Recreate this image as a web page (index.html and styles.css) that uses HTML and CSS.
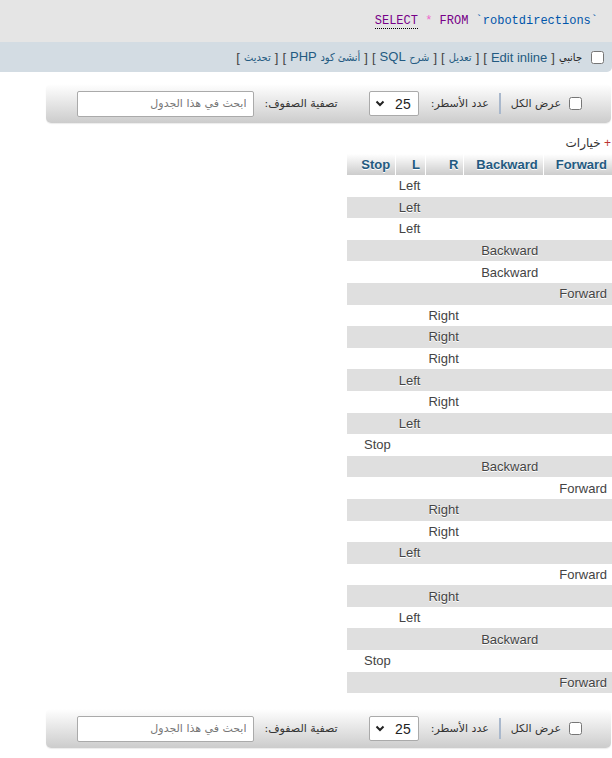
FILE: index.html
```html
<!DOCTYPE html>
<html lang="ar" dir="rtl">
<head>
<meta charset="utf-8">
<title>robotdirections</title>
<link rel="stylesheet" href="styles.css">
</head>
<body>
<div class="sql-box">
  <code class="sql"><span class="kw kw-first">SELECT</span> <span class="star">*</span> <span class="kw">FROM</span> <span class="ident">`robotdirections`</span></code>
</div>
<div class="tools-bar">
  <input type="checkbox" class="cb">
  <span class="tool-label ar">جانبي</span>
  <span class="br">[</span> <a class="lnk">Edit inline</a> <span class="br">]</span>
  <span class="br">[</span> <a class="lnk ar">تعديل</a> <span class="br">]</span>
  <span class="br">[</span> <a class="lnk"><span class="ar">شرح</span> SQL</a> <span class="br">]</span>
  <span class="br">[</span> <a class="lnk"><span class="ar">أنشئ كود</span> PHP</a> <span class="br">]</span>
  <span class="br">[</span> <a class="lnk ar">تحديث</a> <span class="br">]</span>
</div>

<div class="nav">
  <input type="checkbox" class="cb">
  <span class="nav-label show-all">عرض الكل</span>
  <span class="sep"></span>
  <span class="nav-label rows-label">عدد الأسطر:</span>
  <div class="select"><span class="sel-val">25</span><svg class="chev" width="10" height="7" viewBox="0 0 10 7"><path d="M1.5 1.5 L5 5 L8.5 1.5" fill="none" stroke="#222" stroke-width="2"/></svg></div>
  <span class="nav-label filter-label">تصفية الصفوف:</span>
  <input type="text" class="search" placeholder="ابحث في هذا الجدول">
</div>

<div class="options"><span class="plus">+</span> خيارات</div>

<table class="data">
  <thead>
    <tr><th>Forward</th><th>Backward</th><th>R</th><th>L</th><th class="th-stop">Stop</th></tr>
  </thead>
  <tbody>
    <tr><td></td><td></td><td></td><td>Left</td><td></td></tr>
    <tr><td></td><td></td><td></td><td>Left</td><td></td></tr>
    <tr><td></td><td></td><td></td><td>Left</td><td></td></tr>
    <tr><td></td><td>Backward</td><td></td><td></td><td></td></tr>
    <tr><td></td><td>Backward</td><td></td><td></td><td></td></tr>
    <tr><td>Forward</td><td></td><td></td><td></td><td></td></tr>
    <tr><td></td><td></td><td>Right</td><td></td><td></td></tr>
    <tr><td></td><td></td><td>Right</td><td></td><td></td></tr>
    <tr><td></td><td></td><td>Right</td><td></td><td></td></tr>
    <tr><td></td><td></td><td></td><td>Left</td><td></td></tr>
    <tr><td></td><td></td><td>Right</td><td></td><td></td></tr>
    <tr><td></td><td></td><td></td><td>Left</td><td></td></tr>
    <tr><td></td><td></td><td></td><td></td><td>Stop</td></tr>
    <tr><td></td><td>Backward</td><td></td><td></td><td></td></tr>
    <tr><td>Forward</td><td></td><td></td><td></td><td></td></tr>
    <tr><td></td><td></td><td>Right</td><td></td><td></td></tr>
    <tr><td></td><td></td><td>Right</td><td></td><td></td></tr>
    <tr><td></td><td></td><td></td><td>Left</td><td></td></tr>
    <tr><td>Forward</td><td></td><td></td><td></td><td></td></tr>
    <tr><td></td><td></td><td>Right</td><td></td><td></td></tr>
    <tr><td></td><td></td><td></td><td>Left</td><td></td></tr>
    <tr><td></td><td>Backward</td><td></td><td></td><td></td></tr>
    <tr><td></td><td></td><td></td><td></td><td>Stop</td></tr>
    <tr><td>Forward</td><td></td><td></td><td></td><td></td></tr>
  </tbody>
</table>

<div class="nav nav-bottom">
  <input type="checkbox" class="cb">
  <span class="nav-label show-all">عرض الكل</span>
  <span class="sep"></span>
  <span class="nav-label rows-label">عدد الأسطر:</span>
  <div class="select"><span class="sel-val">25</span><svg class="chev" width="10" height="7" viewBox="0 0 10 7"><path d="M1.5 1.5 L5 5 L8.5 1.5" fill="none" stroke="#222" stroke-width="2"/></svg></div>
  <span class="nav-label filter-label">تصفية الصفوف:</span>
  <input type="text" class="search" placeholder="ابحث في هذا الجدول">
</div>
</body>
</html>
```

FILE: styles.css
```css
html, body {
  margin: 0;
  padding: 0;
  background: #fff;
}
body {
  direction: rtl;
  font-family: "Liberation Sans", "DejaVu Sans", Arial, sans-serif;
  font-size: 13px;
  color: #444;
  width: 612px;
  height: 758px;
  overflow: hidden;
}

.sql-box {
  background: #e5e5e5;
  height: 42px;
  box-sizing: border-box;
  padding: 12px 14px 0 0;
  direction: ltr;
  text-align: right;
}
.sql {
  font-family: "Liberation Mono", "DejaVu Sans Mono", monospace;
  font-size: 12px;
  line-height: 15px;
  white-space: pre;
}
.kw { color: #770088; }
.kw-first { border-bottom: 1px dotted #000; }
.star { color: #ee66cc; }
.ident { color: #0055aa; }

.tools-bar {
  background: #d3dce3;
  height: 30px;
  box-sizing: border-box;
  display: flex;
  align-items: center;
  gap: 4px;
  padding-right: 8px;
  border-bottom-right-radius: 5px;
  white-space: nowrap;
  line-height: 15px;
}
.tools-bar .cb { margin: 0 0 0 5px; }
.ar {
  font-family: "DejaVu Sans Condensed", "DejaVu Sans", sans-serif;
  font-size: 11px;
}
.tool-label { color: #222; }
.lnk { color: #235a81; text-decoration: none; }
.br { color: #444; }

.cb {
  width: 13px;
  height: 13px;
  margin: 0;
  flex: none;
}

.nav {
  width: fit-content;
  margin: 12px 1px 0 0;
  height: 39px;
  box-sizing: border-box;
  display: flex;
  align-items: center;
  padding: 0 29px 0 31px;
  background: linear-gradient(#ffffff, #cccccc);
  border-radius: 5px;
  box-shadow: 0 1px 1px rgba(0,0,0,0.08);
  white-space: nowrap;
}
.nav-bottom { margin-top: 16px; }
.nav-label {
  font-family: "DejaVu Sans", sans-serif;
  font-size: 11px;
  color: #333;
}
.show-all { margin-right: 8px; }
.sep {
  width: 2px;
  height: 21px;
  background: #a9b8cc;
  margin: 0 10px 0 10px;
}
.rows-label { margin-left: 12px; }
.select {
  width: 50px;
  height: 25px;
  box-sizing: border-box;
  background: #fff;
  border: 1px solid #aaa;
  border-radius: 2px;
  display: flex;
  align-items: center;
  justify-content: space-between;
  padding: 0 7px 0 5px;
}
.sel-val {
  font-size: 14px;
  color: #222;
}
.filter-label { margin: 0 31px 0 10px; }
.search {
  width: 177px;
  height: 26px;
  box-sizing: border-box;
  margin: 0;
  border: 1px solid #aaa;
  border-radius: 2px;
  padding: 0 7px;
  font-family: "DejaVu Sans", sans-serif;
  font-size: 11px;
  direction: rtl;
  background: #fff;
}
.search::placeholder { color: #777; }

.options {
  margin-top: 13px;
  padding-right: 1px;
  font-size: 12px;
  line-height: 15px;
  color: #333;
}
.plus { color: #b33; }

.data {
  margin-top: 3px;
  border-collapse: collapse;
  border-spacing: 0;
}
.data th {
  background: linear-gradient(#ffffff, #cccccc);
  color: #235a81;
  font-weight: bold;
  text-align: right;
  padding: 3px 5px 3px 12px;
  line-height: 15px;
  border-left: 1px solid #fff;
  text-shadow: 0 1px 0 #fff;
}
.data th.th-stop {
  border-left: none;
  padding-left: 14px;
}
.data td {
  padding: 3.3px 5px 3.3px 3px;
  line-height: 15px;
  text-align: right;
  color: #444;
  text-shadow: 0 1px 0 #fff;
}
.data tbody tr:nth-child(odd) { background: #fff; }
.data tbody tr:nth-child(even) { background: #dfdfdf; }
```
